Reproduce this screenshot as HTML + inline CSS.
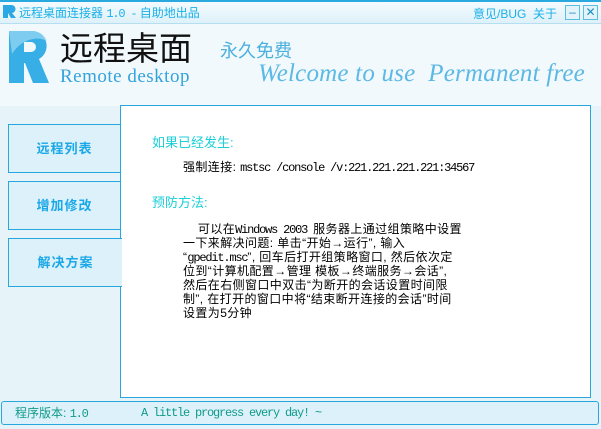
<!DOCTYPE html>
<html><head><meta charset="utf-8"><style>
*{margin:0;padding:0;box-sizing:border-box}
body{width:601px;height:429px;overflow:hidden;background:#e6f4fa;font-family:"Liberation Sans","Noto Sans CJK SC",sans-serif;position:relative}
.a{position:absolute;white-space:nowrap}
#top{left:0;top:0;width:601px;height:24px;background:linear-gradient(#f4fbfe,#dff1f9);border-top:2px solid #29a9dd;border-bottom:1px solid #b5def0}
#head{left:0;top:24px;width:601px;height:82px;background:#f2f9fc}
.tab{position:absolute;left:8px;width:113px;height:49px;background:#dcf1fa;border:1px solid #27a7dc;color:#1aa8e8;font-weight:bold;font-size:13px;text-align:center;line-height:47px;letter-spacing:1px}
#panel{left:120px;top:105px;width:471px;height:293px;background:#fff;border:1px solid #27a7dc}
.t{font-size:12px;color:#000;font-family:"WenQuanYi Zen Hei",sans-serif;letter-spacing:.4px}
.t div{height:14px;line-height:14px}
.m{font-family:"Liberation Mono",monospace;font-size:12px;letter-spacing:-1.2px;line-height:1}
.c{color:#1ccfd8;font-size:13px}
#status{left:1px;top:401px;width:598px;height:24px;border:1px solid #27a7dc;border-radius:3px;background:#dcf1fa;color:#119a8a;font-size:12px;line-height:22px;font-family:"WenQuanYi Zen Hei",sans-serif}
.btn{position:absolute;top:5px;width:15px;height:15px;border:1px solid #5cbde3;background:#e2f3fa;color:#1a8fbf;font-size:12px;line-height:13px;text-align:center}
</style></head><body>
<div id="top" class="a"></div>
<svg class="a" style="left:2px;top:4px" width="15" height="15" viewBox="0 0 15 15"><path d="M1 1h8a4 4 0 0 1 1 8l4 5h-5l-3-5v5H1z" fill="#2ba7e3"/></svg>
<div class="a" style="left:19px;top:4px;font-size:12px;color:#19b0e9;font-family:'WenQuanYi Zen Hei',sans-serif">远程桌面连接器 <span class="m">1.0 -</span> 自助地出品</div>
<div class="a" style="left:473px;top:5px;font-size:12px;color:#19b0e9">意见/BUG&nbsp;&nbsp;关于</div>
<div class="btn" style="left:565px">–</div><div class="btn" style="left:583px">✕</div>
<div id="head" class="a"></div>
<svg class="a" style="left:8px;top:30px" width="42" height="54" viewBox="0 0 42 54"><path d="M1 1h24a15 15 0 0 1 6 28l10 24H25l-8-20H16v20H1z" fill="#38aee6"/><path d="M16 12h7a5 5 0 0 1 0 10h-7z" fill="#f2f9fc"/><path d="M1 1h24a15 15 0 0 1 14 10C30 6 14 8 4 24z" fill="#9dd8f4" opacity=".7"/></svg>
<div class="a" style="left:60px;top:32px;font-size:33px;color:#111;line-height:34px">远程桌面</div>
<div class="a" style="left:60px;top:66px;font-size:19px;color:#33a3dc;font-family:'Liberation Serif',serif;letter-spacing:.5px">Remote desktop</div>
<div class="a" style="left:220px;top:37px;font-size:18px;color:#4bb0de">永久免费</div>
<div class="a" style="left:258px;top:60px;font-size:25px;color:#5cb8e4;font-family:'Liberation Serif',serif;font-style:italic;letter-spacing:.2px">Welcome to use&nbsp; Permanent free</div>
<div class="tab" style="top:124px">远程列表</div>
<div class="tab" style="top:181px">增加修改</div>
<div id="panel" class="a"></div>
<div class="tab" style="top:238px;width:114px;border-right:none;z-index:2">解决方案</div>
<div class="a c" style="left:152px;top:132px">如果已经发生:</div>
<div class="a t" style="left:183px;top:160px"><div>强制连接: <span class="m">mstsc /console /v:221.221.221.221:34567</span></div></div>
<div class="a c" style="left:152px;top:192px">预防方法:</div>
<div class="a t" style="left:183px;top:222px"><div>&nbsp;&nbsp;&nbsp;&nbsp;可以在<span class="m">Windows 2003 </span>服务器上通过组策略中设置</div><div>一下来解决问题: 单击“开始→运行”, 输入</div><div>“<span class="m">gpedit.msc</span>”, 回车后打开组策略窗口, 然后依次定</div><div>位到“计算机配置→管理 模板→终端服务→会话”,</div><div>然后在右侧窗口中双击“为断开的会话设置时间限</div><div>制”, 在打开的窗口中将“结束断开连接的会话”时间</div><div>设置为5分钟</div></div>
<div id="status" class="a"><span style="position:absolute;left:13px">程序版本: <span class="m">1.0</span></span><span class="m" style="position:absolute;left:139px;line-height:22px">A little progress every day! ~</span></div>
</body></html>
